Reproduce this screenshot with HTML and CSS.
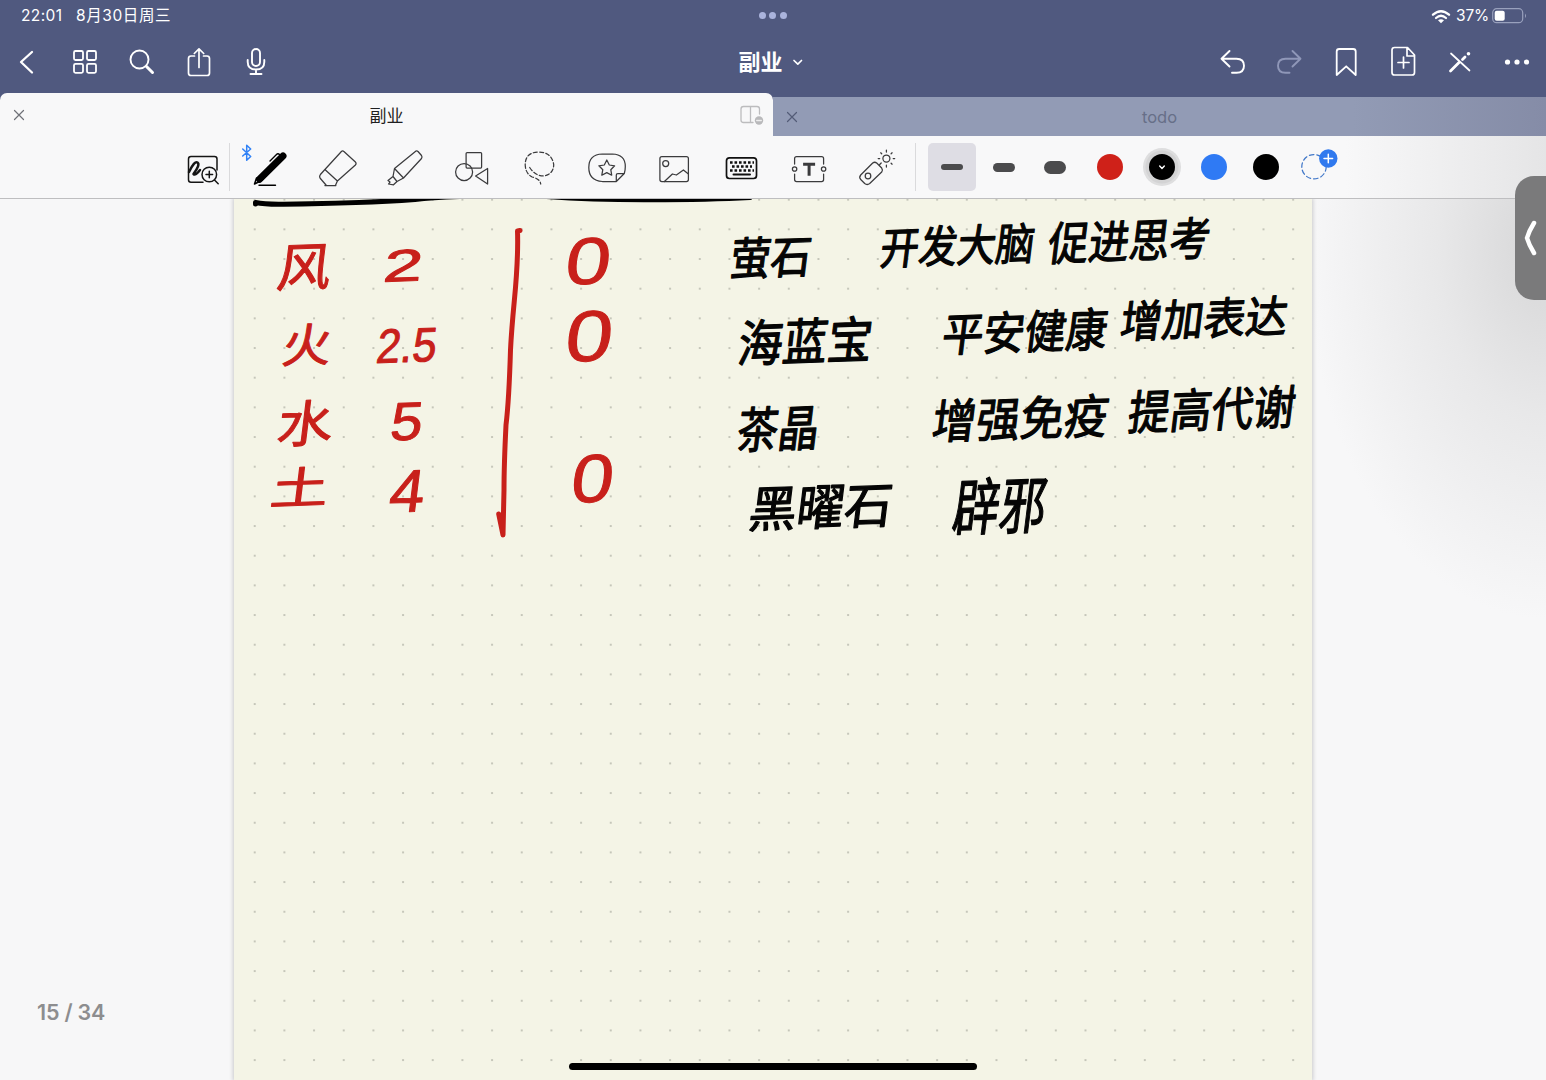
FILE: index.html
```html
<!DOCTYPE html>
<html lang="zh-CN">
<head>
<meta charset="utf-8">
<title>副业</title>
<link rel="stylesheet" href="styles.css">
</head>
<body>
<div class="app">
  <header class="header">
    <div class="status">
      <div class="status-left"><span>22:01</span><span class="date">8月30日周三</span></div>
      <div class="multitask"><i></i><i></i><i></i></div>
      <div class="status-right">
        <svg class="wifi" viewBox="1431 8 20 15"><path d="M1433 13.700Q1441 6.700 1449 13.700" stroke-width="2.300"/><path d="M1436 17Q1441 12.500 1446 17" stroke-width="2.200"/><path class="solid" d="M1438 19.300Q1441 17 1444 19.300L1441 22.300Z"/></svg>
        <span>37%</span>
        <svg class="battery" viewBox="1492 8 35 16"><rect x="1492.700" y="8.700" width="30" height="14" rx="4" stroke="#99a1bd" stroke-width="1.200"/><rect class="solid" x="1494.700" y="10.700" width="10" height="10" rx="2"/><path d="M1525 13.500v4.500q2-2.200 0-4.500" fill="#99a1bd" stroke="none"/></svg>
      </div>
    </div>
    <nav class="nav">
      <div class="nav-group">
        <svg viewBox="11.5 45.5 34 34"><path d="M32.500 52.500 21.500 62.500 32.500 73" stroke-width="2.300"/></svg>
        <svg viewBox="68.5 45.5 34 34"><g stroke-width="1.800"><rect x="74.500" y="51.500" width="9" height="9" rx="1.500"/><rect x="87.500" y="51.500" width="9" height="9" rx="1.500"/><rect x="74.500" y="64.300" width="9" height="9" rx="1.500"/><rect x="87.500" y="64.300" width="9" height="9" rx="1.500"/></g></svg>
        <svg viewBox="125.5 45.5 34 34"><circle cx="140" cy="60" r="9" stroke-width="1.900"/><path d="m147 67 6 6" stroke-width="3"/></svg>
        <svg viewBox="182.5 45.5 34 34"><path d="M195 56.500h-3.500q-2.500 0-2.500 2.500v14.500q0 2.500 2.500 2.500h16q2.500 0 2.500-2.500V59q0-2.500-2.500-2.500H204M199.500 68V49.500M194.800 54l4.700-4.700 4.700 4.700" stroke-width="1.700"/></svg>
        <svg viewBox="239.5 45.5 34 34"><rect x="252.500" y="49.500" width="8" height="17" rx="4" stroke-width="1.900"/><path d="M248.200 60.500v2q0 7.500 8.300 7.500t8.300-7.500v-2M256.500 70v4.500M251 74.500h11" stroke-width="1.900"/></svg>
      </div>
      <div class="doc-title"><span>副业</span><svg viewBox="792 58 11 9"><path d="m794 60.500 3.800 3.700 3.700-3.700" stroke-width="1.700"/></svg></div>
      <div class="nav-group">
        <svg viewBox="1215.500 45.500 34 34"><path d="M1230 51.500 1222 59.200 1230 67M1222.500 59.200h14.500q7.500 0 7.500 7t-7.500 7h-4.500" stroke-width="1.900"/></svg>
        <svg class="dim" viewBox="1272.500 45.500 34 34"><path d="M1293 51.500 1301 59.200 1293 67M1300.500 59.200H1286q-7.500 0-7.500 7t7.500 7h4" stroke-width="1.900"/></svg>
        <svg viewBox="1329.500 45.500 34 34"><path d="M1337.200 75.500V52q0-2.500 2.500-2.500h14q2.500 0 2.500 2.500v23.500l-9.500-8.700z" stroke-width="1.800"/></svg>
        <svg viewBox="1386.500 45.500 34 34"><path d="M1408 48h-13q-2.500 0-2.500 2.500v22.500q0 2.500 2.500 2.500h17.500q2.500 0 2.500-2.500V55.500zM1407.500 48v8.500h7.500M1404 57.500v11M1398.500 63h11" stroke-width="1.700"/></svg>
        <svg viewBox="1443.500 45.500 34 34"><path d="m1451.500 54 18.500 17" stroke-width="1.700"/><path d="m1451 71.500 8.500-8.500M1463 60l2.500-2.500" stroke-width="2.800"/><circle class="solid" cx="1469" cy="54.300" r="1.800"/></svg>
        <svg viewBox="1500.500 45.500 34 34"><g class="solid"><circle cx="1508" cy="62.500" r="2.600"/><circle cx="1517.500" cy="62.500" r="2.600"/><circle cx="1527" cy="62.500" r="2.600"/></g></svg>
      </div>
    </nav>
    <div class="tabs">
      <div class="tab active">
        <svg class="close" viewBox="0 0 12 12"><path d="m1.500 1.500 9 9M10.500 1.500l-9 9"/></svg>
        <span>副业</span>
        <svg class="split" viewBox="740 104 24 22"><path d="M759.500 114v-5q0-2.500-2.500-2.500h-13.500q-2.500 0-2.500 2.500v11q0 2.500 2.500 2.500H753M750.500 106.500v16"/><circle cx="759" cy="120.500" r="4.200" fill="#b9b9bb" stroke="none"/><path d="M756.700 120.500h4.600" stroke="#eee" stroke-width="1.300" stroke-dasharray="1 .8"/></svg>
      </div>
      <div class="tab inactive">
        <svg class="close" viewBox="0 0 12 12"><path d="m1.500 1.500 9 9M10.500 1.500l-9 9"/></svg>
        <span>todo</span>
        <i class="spacer"></i>
      </div>
    </div>
  </header>

  <div class="toolbar">
    <svg class="zoom-tool" viewBox="183 146 40 40"><path d="M203 181.300h-12q-2.500 0-2.500-2.500V158q0-2.500 2.500-2.500h23.500q2.500 0 2.500 2.500v11"/><path d="M189 171q5.500-11.500 8.500-9.500t-4 11.500q2 2 6.500-4" stroke-width="2.500"/><circle cx="209.300" cy="173.500" r="7.300"/><path d="M206 173.500h6.600M209.300 170.200v6.600M214.500 179l3.700 3.800"/></svg>
    <i class="rule"></i>
    <div class="tools">
      <svg viewBox="241 143 58 48"><path d="m242.700 149 8 7.500-4 3.700v-15l4 3.800-8 7" stroke="#3182f6" stroke-width="1.500"/><path d="M283 156 259.500 179.300" stroke="#000" stroke-width="7"/><path d="m256.500 178-2 6 5-2.500" stroke="#000" stroke-width="1.500"/><path d="m270 161 6.500-6.500q1.500-1.500 3.500.5M259 185.300h16.500" stroke="#000" stroke-width="1.400"/></svg>
      <svg viewBox="317.100 147 40 40"><path d="m325 169.500 16.500-18q1.200-1.200 2.500 0l11.500 10.500q1.300 1.300 0 3L337.500 181zM325 169.500l-4.500 5q-1.500 2 0 4l6 7h9l2-4.500M325 185.500h11"/></svg>
      <svg viewBox="384.500 147 40 40"><path d="m395 168.500 21.500-17.500q1-.5 2 .5l3.500 4q1 1.500 0 3L404 178zM395 168.500l-1.500 8 4 5 6.500-3.500M393.500 176.500l-5 4 2 1.500-1.500 2 5 .8 3.500-3.300"/></svg>
      <svg viewBox="451.900 147 40 40"><rect x="466" y="152.500" width="15.500" height="15.500" rx="1"/><circle cx="464" cy="172" r="8.500"/><path d="m475.500 176 12-7.500V184z"/></svg>
      <svg viewBox="519.300 147 40 40"><path d="M530 167.500q5.500 8.500 14 8.500 10-2 10-11.500-2-12.500-15.500-12.500-12.500.5-13 12 0 9.500 7 13 8 2 8.500 7" stroke-dasharray="4 2.300"/></svg>
      <svg viewBox="586.700 147 40 40"><path d="M616 181.500h-14q-13.500-1-13.500-14t13.500-13.500h10q13 .5 13 12.500 0 4-1 7zM616 181.500v-6.500q0-1.500 1.500-1.500h6.500"/><path d="m606.500 160 2.500 5 5.300.8-3.800 3.900.9 5.500-4.900-2.600-5 2.600 1-5.500-3.900-3.900 5.400-.8z"/></svg>
      <svg viewBox="654.100 147 40 40"><rect x="660" y="156.500" width="28.500" height="25" rx="2"/><circle cx="665.800" cy="163.500" r="3"/><path d="m664.500 181.500 8-7.500 4 1 7-5 5 4"/></svg>
      <svg viewBox="721.500 147 40 40"><g stroke="#111"><rect x="727" y="157.800" width="30" height="20.700" rx="3" stroke-width="1.700"/><path d="M730.500 162.500h24M730.500 170.500h24M732.500 166.500h20" stroke-width="2.600" stroke-dasharray="2.600 1.900" stroke-linecap="butt"/><path d="M734 174.500h16.500" stroke-width="2"/></g></svg>
      <svg viewBox="788.900 147 40 40"><path d="M794.500 164v-5.500q0-2 2-2h25q2 0 2 2v5.500M794.500 174v5.500q0 2 2 2h25q2 0 2-2V174"/><circle cx="794.500" cy="169" r="2.200"/><circle cx="823.500" cy="169" r="2.200"/><path d="M803 164.200h12M809 164.200v11.500" stroke-width="3" stroke-linecap="butt"/></svg>
      <svg viewBox="856.300 147 40 40"><path d="m861 175 12-12q2-1.500 4 0l5 5q1.500 2 0 4l-12 11.500q-2.500 2-5 0l-4-4q-2-2 0-4.500M880 164.500l1.500-1.500"/><circle cx="868.300" cy="176" r="2.800"/><circle cx="886.700" cy="158.500" r="3.500"/><path d="M886.700 152v-2M886.700 165v2M880 158.500h-1.500M893.500 158.500h1.500M882 153.800l-1-1M891.400 153.800l1-1M891.400 163.200l1 1"/></svg>
    </div>
    <i class="rule"></i>
    <div class="sizes">
      <div class="size selected"><i class="thin"></i></div>
      <div class="size"><i class="medium"></i></div>
      <div class="size"><i class="thick"></i></div>
    </div>
    <div class="colors">
      <div><i class="swatch red"></i></div>
      <div><i class="swatch current"><svg viewBox="0 0 10 8"><path d="m2.700 3 2.300 2.500L7.300 3"/></svg></i></div>
      <div><i class="swatch blue"></i></div>
      <div><i class="swatch"></i></div>
      <div><svg class="add-color" viewBox="1297 147 41 40"><circle cx="1314" cy="166.700" r="12.200" stroke="#3f76c8" stroke-dasharray="4.500 3"/><circle cx="1328.300" cy="158.500" r="9.200" fill="#3079ee" stroke="none"/><path d="M1324 158.500h8.600M1328.300 154.200v8.600" stroke="#fff" stroke-width="1.500"/></svg></div>
    </div>
  </div>

  <main class="canvas">
    <div class="page">
      <svg class="ink" viewBox="234 199 1078 881">
        <defs><pattern id="dots" x="239.900" y="214.500" width="29.670" height="29.670" patternUnits="userSpaceOnUse"><circle cx="14.830" cy="14.830" r="1.100" fill="#bbbcb0" stroke="none"/></pattern></defs>
        <rect x="234" y="199" width="1078" height="881" fill="url(#dots)" stroke="none"/>
        <path class="pen-black" d="M255.500 204V202.500Q265 204.500 283 204.200C340 203.500 380 202 415 199.500Q450 195 540 196Q590 200 650 199.800T750 197.500"/>
        <path class="pen-red" d="M520 230.500 517.500 231C519 275 513 300 510.500 350Q509 400 506 425Q504 465 504 490L503 535 498.700 514"/>
        <g class="script red">
          <text x="278" y="286" font-size="52" textLength="54" lengthAdjust="spacingAndGlyphs">风</text>
          <text x="283" y="362" font-size="46" textLength="49" lengthAdjust="spacingAndGlyphs">火</text>
          <text x="278" y="442" font-size="50" textLength="56" lengthAdjust="spacingAndGlyphs">水</text>
          <text x="271" y="504" font-size="44" textLength="58" lengthAdjust="spacingAndGlyphs">土</text>
          <g class="digits">
            <text x="384" y="281" font-size="45" textLength="39" lengthAdjust="spacingAndGlyphs">2</text>
            <text x="377" y="362" font-size="48" textLength="60" lengthAdjust="spacingAndGlyphs">2.5</text>
            <text x="391" y="440" font-size="54" textLength="32" lengthAdjust="spacingAndGlyphs">5</text>
            <text x="390" y="512" font-size="60" textLength="35" lengthAdjust="spacingAndGlyphs">4</text>
            <text x="566" y="284" font-size="66" textLength="45" lengthAdjust="spacingAndGlyphs">0</text>
            <text x="566" y="361" font-size="72" textLength="47" lengthAdjust="spacingAndGlyphs">0</text>
            <text x="572" y="502" font-size="68" textLength="42" lengthAdjust="spacingAndGlyphs">0</text>
          </g>
        </g>
        <g class="script black">
          <text x="731" y="274" font-size="45" textLength="81" lengthAdjust="spacingAndGlyphs">萤石</text>
          <text x="881" y="262" font-size="44" textLength="154" lengthAdjust="spacingAndGlyphs">开发大脑</text>
          <text x="1049" y="258" font-size="46" textLength="162" lengthAdjust="spacingAndGlyphs">促进思考</text>
          <text x="739" y="360" font-size="50" textLength="134" lengthAdjust="spacingAndGlyphs">海蓝宝</text>
          <text x="943" y="349" font-size="46" textLength="165" lengthAdjust="spacingAndGlyphs">平安健康</text>
          <text x="1121" y="335" font-size="44" textLength="167" lengthAdjust="spacingAndGlyphs">增加表达</text>
          <text x="738" y="447" font-size="49" textLength="82" lengthAdjust="spacingAndGlyphs">茶晶</text>
          <text x="933" y="436" font-size="47" textLength="176" lengthAdjust="spacingAndGlyphs">增强免疫</text>
          <text x="1129" y="427" font-size="47" textLength="167" lengthAdjust="spacingAndGlyphs">提高代谢</text>
          <text x="750" y="525" font-size="49" textLength="143" lengthAdjust="spacingAndGlyphs">黑曜石</text>
          <text x="954" y="529" font-size="62" textLength="93" lengthAdjust="spacingAndGlyphs">辟邪</text>
        </g>
      </svg>
    </div>
    <div class="page-count">15 / 34</div>
    <div class="side-handle"><svg viewBox="0 0 14 38"><path d="M10 4Q5 12 3 19 5 26 10 34"/></svg></div>
    <i class="home-bar"></i>
  </main>
</div>
</body>
</html>
```
FILE: styles.css
```css
* { box-sizing: border-box; }
body {
  margin: 0;
  font-family: Inter, "Noto Sans CJK SC", sans-serif;
  background: #f8f8fa;
}
svg { display: block; fill: none; stroke: currentColor; stroke-linecap: round; stroke-linejoin: round; }
.solid { fill: currentColor; stroke: none; }

.app { width: 1546px; height: 1080px; display: flex; flex-direction: column; overflow: hidden; }
.header { background: #50597f; color: #fff; }

.status { height: 32px; display: grid; grid-template-columns: 1fr auto 1fr; align-items: center; padding: 0 20px 0 21px; font-size: 15.5px; line-height: 20px; }
.status-left { display: flex; gap: 13.5px; letter-spacing: .4px; }
.date { letter-spacing: .6px; }
.multitask { display: flex; gap: 3.5px; margin: -2px 2px 0 0; }
.multitask i { width: 7px; height: 7px; border-radius: 50%; background: #aab3dc; }
.status-right { display: flex; justify-content: flex-end; align-items: center; gap: 5px; letter-spacing: -.2px; }
.wifi { width: 20px; height: 15px; }
.battery { width: 35px; height: 16px; margin: 0 -1px 0 -2px; }

.nav { height: 61px; display: grid; grid-template-columns: 1fr auto 1fr; align-items: center; padding-bottom: 1px; }
.nav-group { display: flex; }
.nav-group:last-child { justify-content: flex-end; }
.nav-group svg { width: 34px; height: 34px; margin: 0 12px 0 11px; }
.dim { color: #8f97b8; }
.doc-title { display: flex; align-items: center; gap: 9px; padding-right: 5px; font-size: 22px; font-weight: 600; line-height: 30px; }
.doc-title svg { width: 11px; height: 9px; }

.tabs { height: 43px; display: grid; grid-template-columns: 1fr 1fr; align-items: end; }
.tab { display: flex; align-items: center; justify-content: space-between; font-size: 17px; }
.tab.active { height: 43px; padding: 0 9px 0 13px; border-radius: 7px 7px 0 0; background: #f8f8f9; color: #1f1f21; }
.tab.active span { margin-left: 8px; }
.tab.inactive { height: 39px; padding: 0 13px; background: linear-gradient(90deg, #929bb5 75%, #858ca7); color: #676f88; font-size: 16.5px; }
.close { width: 12px; height: 12px; color: #6e7077; stroke-width: 1.2; }
.inactive .close { color: #535c77; }
.spacer { width: 12px; }
.split { width: 24px; height: 22px; color: #bcbcbe; stroke-width: 1.3; }

.toolbar { height: 63px; flex: none; display: flex; align-items: center; padding-left: 182.5px; border-bottom: 1px solid #bebec0; background: linear-gradient(90deg, #f8f8f9 87%, #e5e5e6); color: #3b3b3d; stroke-width: 1.25; }
.zoom-tool { width: 40px; height: 40px; color: #151515; stroke-width: 1.5; }
.rule { width: 1px; height: 48px; background: #dadadc; margin-left: 6.5px; }
.tools { display: grid; grid-template-columns: repeat(10, 67.4px); justify-items: center; align-items: center; margin-left: 6px; }
.tools svg { width: 40px; height: 40px; }
.tools svg:first-child { width: 58px; height: 48px; color: #000; }
.tools + .rule { margin-left: 5px; }
.sizes { display: flex; gap: 3.7px; margin-left: 12px; }
.size { width: 48px; height: 48px; display: grid; place-items: center; border-radius: 5px; }
.selected { background: #dedde4; }
.size i { width: 22px; border-radius: 8px; background: #4b4b4d; }
.thin { height: 6px; }
.medium { height: 9px; }
.thick { height: 13px; }
.colors { display: grid; grid-template-columns: repeat(5, 51.8px); margin-left: 5px; place-items: center; }
.swatch { width: 26px; height: 26px; display: grid; place-items: center; border-radius: 50%; background: #000; }
.swatch.red { background: #cf2119; }
.swatch.blue { background: #2f7af4; }
.swatch.current { color: #fff; box-shadow: 0 0 0 3.5px #d3d3d4, 0 0 0 6px #dededf; }
.swatch svg { width: 10px; height: 8px; stroke-width: 1.4; }
.add-color { width: 41px; height: 40px; }

.canvas { position: relative; flex: 1; background: radial-gradient(ellipse 240px 370px at 1546px 50px, #d6d6d7, #e8e8e9 45%, #f7f7f8 100%); }
.page { width: 1078px; height: 881px; margin-left: 234px; background: #f4f4e6; box-shadow: 0 0 4px 1px #c9c9cc; clip-path: inset(0 -8px 0 -8px); }
.ink { width: 1078px; height: 881px; }
.pen-black { stroke: #000; stroke-width: 5; }
.pen-red { stroke: #c8201b; stroke-width: 5; }
.script { font-family: "Noto Sans CJK SC", sans-serif; }
.script text { transform-box: fill-box; transform-origin: center; transform: skew(-7deg, -2deg); }
.script.red { fill: #c8201b; stroke: #c8201b; stroke-width: 1; }
.script.black { fill: #050505; stroke: #050505; stroke-width: 1.3; }
.digits { font-family: "Liberation Sans", sans-serif; }
.page-count { position: absolute; left: 37px; top: 799px; font-size: 21.5px; line-height: 28px; font-weight: 600; letter-spacing: -.2px; color: #8d8d8f; }
.side-handle { position: absolute; right: 0; top: -23px; width: 31px; height: 124px; display: flex; align-items: center; justify-content: center; border-radius: 19px 0 0 19px; background: #7a7a7b; color: #fff; }
.side-handle svg { width: 14px; height: 38px; stroke-width: 4.5; }
.home-bar { position: absolute; left: 569px; bottom: 10px; width: 408px; height: 7px; border-radius: 4px; background: #000; }
```
